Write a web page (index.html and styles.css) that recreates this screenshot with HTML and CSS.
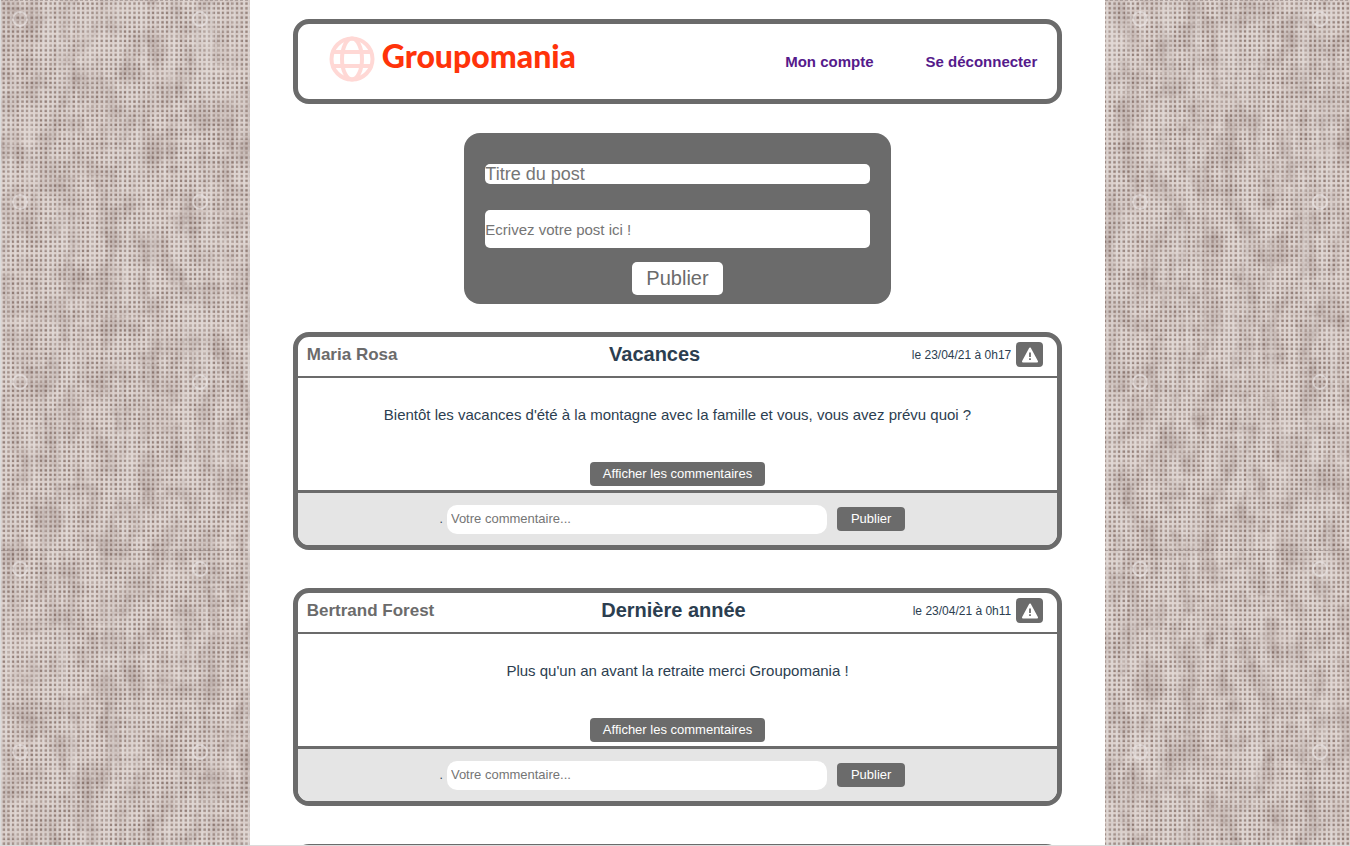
FILE: index.html
```html
<!DOCTYPE html>
<html lang="fr">
<head>
<meta charset="utf-8">
<title>Groupomania</title>
<meta name="viewport" content="width=device-width, initial-scale=1">
<link rel="stylesheet" href="styles.css">
</head>
<body>
<svg class="linen" aria-hidden="true">
  <defs>
    <pattern id="weave" width="14" height="14" patternUnits="userSpaceOnUse">
      <rect width="14" height="14" fill="#c9bab5"/>
      <path d="M1.5 0v14M6.2 0v14M10.8 0v14" stroke="#d9d4d3" stroke-width="1.9"/>
      <path d="M0 1.2h14M0 5.9h14M0 10.6h14" stroke="#e0d4ce" stroke-width="1.9" opacity=".8"/>
      <path d="M3.8 2.5v2.2M8.5 2.5v2.2M13.1 2.5v2.2M3.8 7.2v2.2M8.5 7.2v2.2M13.1 7.2v2.2M3.8 11.8v2.2M8.5 11.8v2.2M13.1 11.8v2.2" stroke="#948079" stroke-width="2.3"/>
    </pattern>
    <pattern id="rings" width="1120" height="550" patternUnits="userSpaceOnUse">
      <g fill="none" stroke="#e9e4e3" stroke-width="1.8" opacity=".65">
        <circle cx="20" cy="19" r="7"/><circle cx="200" cy="19" r="7"/>
        <circle cx="20" cy="202" r="7"/><circle cx="200" cy="202" r="7"/>
        <circle cx="20" cy="382" r="7"/><circle cx="200" cy="382" r="7"/>
      </g>
      <path d="M0 .5h1120" stroke="#887a77" stroke-dasharray="3 2" opacity=".5"/>
    </pattern>
    <filter id="fibre" x="0" y="0" width="100%" height="100%" color-interpolation-filters="sRGB">
      <feTurbulence type="fractalNoise" baseFrequency=".05 .03" numOctaves="4" seed="8"/>
      <feColorMatrix values="0 0 0 0 .45  0 0 0 0 .36  0 0 0 0 .34  .7 0 0 0 -.27"/>
    </filter>
    <filter id="warp" x="0" y="0" width="100%" height="100%" color-interpolation-filters="sRGB">
      <feTurbulence type="fractalNoise" baseFrequency=".25 .01" numOctaves="2" seed="3"/>
      <feColorMatrix values="0 0 0 0 .9  0 0 0 0 .88  0 0 0 0 .87  0 1 0 0 -.42"/>
    </filter>
    <filter id="weft" x="0" y="0" width="100%" height="100%" color-interpolation-filters="sRGB">
      <feTurbulence type="fractalNoise" baseFrequency=".02 .25" numOctaves="2" seed="5"/>
      <feColorMatrix values="0 0 0 0 .9  0 0 0 0 .86  0 0 0 0 .84  0 1 0 0 -.42"/>
    </filter>
  </defs>
  <rect width="100%" height="100%" fill="url(#weave)"/>
  <rect width="100%" height="100%" filter="url(#fibre)"/>
  <rect width="100%" height="100%" filter="url(#warp)"/>
  <rect width="100%" height="100%" filter="url(#weft)"/>
  <rect width="100%" height="100%" fill="url(#rings)"/>
</svg>
<div class="shell">
  <div class="page">
    <header class="banner">
      <div class="brand">
        <svg class="globe" viewBox="0 0 46 46" aria-hidden="true">
          <g fill="none" stroke="#ffd8d5" stroke-width="4">
            <circle cx="23" cy="23" r="20.5"/>
            <ellipse cx="23" cy="23" rx="10" ry="20.5"/>
            <path d="M4 16h38M4 30h38"/>
          </g>
        </svg>
        <span class="wordmark">Groupomania</span>
      </div>
      <nav class="menu">
        <a href="#compte">Mon compte</a>
        <a href="#sortie">Se déconnecter</a>
      </nav>
    </header>
    <form class="composer">
      <input class="field field-title" type="text" placeholder="Titre du post" aria-label="Titre du post">
      <input class="field field-body" type="text" placeholder="Ecrivez votre post ici !" aria-label="Texte du post">
      <button class="publish" type="button">Publier</button>
    </form>
    <main class="feed">
      <article class="post">
        <header class="post-head">
          <span class="author">Maria Rosa</span>
          <h2 class="title">Vacances</h2>
          <div class="meta">
            <time>le 23/04/21 à 0h17</time>
            <button class="report" type="button" aria-label="Signaler"><svg viewBox="0 0 18 16" aria-hidden="true"><path d="M9 1.5 16 14.5H2Z" fill="#fff" stroke="#fff" stroke-width="2" stroke-linejoin="round"/><path d="M9 5.5v4.5M9 11.2v1.8" stroke="#6b6b6b" stroke-width="1.8"/></svg></button>
          </div>
        </header>
        <div class="post-body">
          <p class="text">Bientôt les vacances d'été à la montagne avec la famille et vous, vous avez prévu quoi ?</p>
          <button class="small-button" type="button">Afficher les commentaires</button>
        </div>
        <form class="reply">
          <span class="dot">.</span>
          <input class="reply-field" type="text" placeholder="Votre commentaire..." aria-label="Votre commentaire">
          <button class="small-button" type="button">Publier</button>
        </form>
      </article>
      <article class="post">
        <header class="post-head">
          <span class="author">Bertrand Forest</span>
          <h2 class="title">Dernière année</h2>
          <div class="meta">
            <time>le 23/04/21 à 0h11</time>
            <button class="report" type="button" aria-label="Signaler"><svg viewBox="0 0 18 16" aria-hidden="true"><path d="M9 1.5 16 14.5H2Z" fill="#fff" stroke="#fff" stroke-width="2" stroke-linejoin="round"/><path d="M9 5.5v4.5M9 11.2v1.8" stroke="#6b6b6b" stroke-width="1.8"/></svg></button>
          </div>
        </header>
        <div class="post-body">
          <p class="text">Plus qu'un an avant la retraite merci Groupomania !</p>
          <button class="small-button" type="button">Afficher les commentaires</button>
        </div>
        <form class="reply">
          <span class="dot">.</span>
          <input class="reply-field" type="text" placeholder="Votre commentaire..." aria-label="Votre commentaire">
          <button class="small-button" type="button">Publier</button>
        </form>
      </article>
      <article class="post"></article>
    </main>
  </div>
</div>
</body>
</html>
```
FILE: styles.css
```css
* { box-sizing: border-box; }

body {
  margin: 0;
  font-family: "Liberation Sans", Arial, sans-serif;
  color: #2c3e50;
}

button, input { font-family: inherit; border: 0; margin: 0; }
input::placeholder { color: #757575; opacity: 1; }

.linen {
  position: fixed;
  inset: 0;
  z-index: -1;
  width: 100%;
  height: 100%;
}

.shell {
  height: 100vh;
  overflow: hidden;
  padding: 0 245px 0 249px;
  border-left: 1px solid #dcdcdc;
  border-bottom: 1px solid #dcdcdc;
}

.page {
  min-height: 100%;
  padding: 19px 5% 0;
  background: #fff;
}

.banner {
  display: flex;
  justify-content: space-between;
  align-items: center;
  height: 85px;
  padding: 0 20px 0 31px;
  border: 5px solid #6b6b6b;
  border-radius: 16px;
}

.brand {
  display: flex;
  align-items: center;
  gap: 7px;
  padding-bottom: 6px;
}

.globe { width: 46px; height: 46px; }

.wordmark {
  font: 900 32px/38px Lato, sans-serif;
  color: #ff330a;
  padding-bottom: 6px;
}

.menu { display: flex; gap: 52px; }

.menu a {
  font-size: 15px;
  font-weight: bold;
  color: #551a8b;
  text-decoration: none;
}

.composer {
  display: flex;
  flex-direction: column;
  align-items: center;
  width: 55.5%;
  margin: 29px auto 28px;
  padding: 31px 0 9px;
  border-radius: 16px;
  background: #6b6b6b;
}

.field {
  width: 90%;
  padding: 0;
  border-radius: 5px;
  background: #fff;
}

.field-title { height: 20px; font-size: 18px; margin-bottom: 26px; }
.field-body { height: 38px; font-size: 15px; margin-bottom: 14px; }

.publish {
  height: 33px;
  padding: 0 14px;
  border-radius: 5px;
  background: #fff;
  color: #6b6b6b;
  font-size: 20px;
}

.feed {
  display: flex;
  flex-direction: column;
  gap: 38px;
}

.post {
  min-height: 218px;
  border: 5px solid #6b6b6b;
  border-radius: 16px;
  overflow: hidden;
}

.post-head {
  display: flex;
  justify-content: space-between;
  align-items: center;
  height: 41px;
  padding: 0 14px 4px 9px;
  border-bottom: 2px solid #6b6b6b;
}

.author { font-size: 17px; font-weight: bold; color: #6b6b6b; }
.title { margin: 0; font-size: 20px; }

.meta {
  display: flex;
  align-items: center;
  gap: 5px;
  font-size: 12px;
}

.report {
  display: grid;
  place-items: center;
  width: 27px;
  height: 25px;
  padding: 0;
  border-radius: 4px;
  background: #6b6b6b;
}

.report svg { width: 18px; height: 16px; }

.post-body {
  display: flex;
  flex-direction: column;
  align-items: center;
  height: 112px;
  padding: 28px 16px 4px;
}

.text { margin: 0 0 auto; font-size: 15px; line-height: 18px; }

.small-button {
  height: 24px;
  padding: 0 13px 1px;
  border-radius: 4px;
  background: #6b6b6b;
  color: #fff;
  font-size: 13px;
}

.reply {
  display: flex;
  justify-content: center;
  align-items: center;
  height: 55px;
  padding-right: 10px;
  border-top: 3px solid #6b6b6b;
  background: #e5e5e5;
}

.reply .small-button { padding: 0 14px 1px; }

.dot { font-size: 12px; margin-right: 4px; }

.reply-field {
  width: 380px;
  height: 29px;
  margin-right: 10px;
  padding: 0 4px 1px;
  border-radius: 10px;
  background: #fff;
  font-size: 13px;
}
```
